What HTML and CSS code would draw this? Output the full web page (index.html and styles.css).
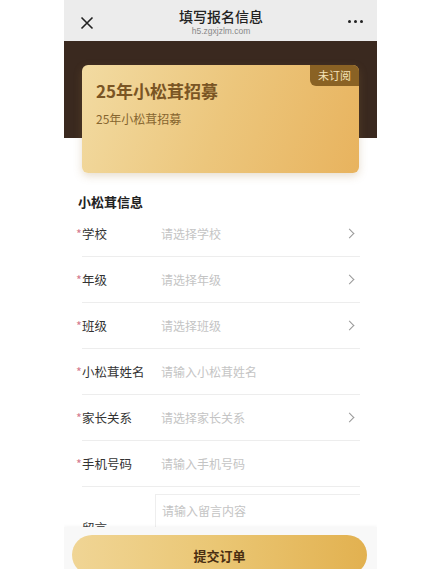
FILE: index.html
```html
<!DOCTYPE html>
<html lang="zh-CN">
<head>
    <meta charset="UTF-8">
    <meta name="viewport" content="width=device-width, initial-scale=1.0">
    <title>填写报名信息</title>
    <link rel="stylesheet" href="styles.css">
</head>
<body>
    <div class="phone">
        <div class="nav-bar">
            <svg class="nav-close" width="14" height="14" viewBox="0 0 14 14">
                <path d="M1.5 1.5 L12.5 12.5 M12.5 1.5 L1.5 12.5" stroke="#222" stroke-width="1.6" fill="none"/>
            </svg>
            <div class="nav-title">
                <div class="nav-name">填写报名信息</div>
                <div class="nav-url">h5.zgxjzlm.com</div>
            </div>
            <div class="nav-more">
                <span></span><span></span><span></span>
            </div>
        </div>

        <div class="hero">
            <div class="event-card">
                <span class="badge">未订阅</span>
                <h2 class="event-title">25年小松茸招募</h2>
                <p class="event-desc">25年小松茸招募</p>
            </div>
        </div>

        <form class="info-form">
            <h3 class="section-title">小松茸信息</h3>

            <div class="form-row">
                <label class="row-label"><i>*</i>学校</label>
                <span class="row-value">请选择学校</span>
                <span class="chevron"></span>
            </div>
            <div class="form-row">
                <label class="row-label"><i>*</i>年级</label>
                <span class="row-value">请选择年级</span>
                <span class="chevron"></span>
            </div>
            <div class="form-row">
                <label class="row-label"><i>*</i>班级</label>
                <span class="row-value">请选择班级</span>
                <span class="chevron"></span>
            </div>
            <div class="form-row">
                <label class="row-label"><i>*</i>小松茸姓名</label>
                <span class="row-value">请输入小松茸姓名</span>
            </div>
            <div class="form-row">
                <label class="row-label"><i>*</i>家长关系</label>
                <span class="row-value">请选择家长关系</span>
                <span class="chevron"></span>
            </div>
            <div class="form-row">
                <label class="row-label"><i>*</i>手机号码</label>
                <span class="row-value">请输入手机号码</span>
            </div>

            <div class="form-row message-row">
                <label class="row-label">留言</label>
                <div class="message-box">请输入留言内容</div>
            </div>
        </form>

        <div class="bottom-bar">
            <button type="button" class="submit-btn">提交订单</button>
        </div>
    </div>
</body>
</html>
```

FILE: styles.css
```css
* {
    margin: 0;
    padding: 0;
    box-sizing: border-box;
}

body {
    font-family: "Noto Sans CJK SC", "Noto Sans", sans-serif;
    background: #fff;
    width: 431px;
    height: 569px;
    overflow: hidden;
}

.phone {
    position: relative;
    width: 313px;
    height: 569px;
    margin-left: 64px;
    background: #fff;
    overflow: hidden;
}

/* 顶部导航 */
.nav-bar {
    height: 41px;
    background: #ececec;
    display: flex;
    align-items: center;
    justify-content: space-between;
    padding: 0 14px 0 16px;
}

.nav-close {
    margin-top: 4px;
}

.nav-title {
    text-align: center;
    margin-top: 3px;
}

.nav-name {
    font-size: 14px;
    font-weight: 500;
    color: #222;
    line-height: 19px;
}

.nav-url {
    font-family: "Liberation Sans", Arial, sans-serif;
    font-size: 8.5px;
    color: #888;
    line-height: 11px;
}

.nav-more {
    display: flex;
    gap: 3px;
    margin-top: 2px;
}

.nav-more span {
    width: 3px;
    height: 3px;
    border-radius: 50%;
    background: #222;
}

/* 活动卡片 */
.hero {
    padding: 24px 18px 0;
    background: linear-gradient(#3a291f 0, #3a291f 97px, transparent 97px);
}

.event-card {
    position: relative;
    height: 108px;
    border-radius: 6px;
    padding: 14px 14px;
    background: linear-gradient(110deg, #f2dba2 0%, #ecc67c 50%, #e8b35e 100%);
    box-shadow: 0 3px 8px rgba(160, 120, 60, 0.25);
}

.badge {
    position: absolute;
    top: 0;
    right: 0;
    width: 49px;
    height: 21px;
    line-height: 21px;
    text-align: center;
    font-size: 11px;
    color: #f4e2b8;
    background: #8a6224;
    border-radius: 0 6px 0 6px;
}

.event-title {
    font-size: 17px;
    font-weight: 700;
    color: #7a5524;
    line-height: 24px;
}

.event-desc {
    margin-top: 8px;
    font-size: 12px;
    color: #86652f;
    line-height: 16px;
}

/* 表单 */
.info-form {
    padding: 20px 17px 0 18px;
}

.section-title {
    font-size: 13px;
    font-weight: 700;
    color: #222;
    line-height: 18px;
    margin-left: -4px;
}

.form-row {
    display: flex;
    align-items: center;
    height: 46px;
    border-bottom: 1px solid #ededed;
    font-size: 12px;
}

.row-label {
    width: 79px;
    color: #333;
    font-size: 12.5px;
}

.row-label i {
    font-style: normal;
    color: #d47a8e;
    display: inline-block;
    width: 6px;
    margin-left: -6px;
}

.row-value {
    flex: 1;
    color: #c4c4c4;
}

.chevron {
    width: 7px;
    height: 7px;
    border-top: 1px solid #999;
    border-right: 1px solid #999;
    transform: rotate(45deg);
    margin-right: 7px;
}

.message-row {
    height: 84px;
    border-bottom: none;
    align-items: flex-start;
    padding-top: 7px;
}

.message-row .row-label {
    width: 73px;
    line-height: 18px;
    margin-top: 25px;
}

.message-box {
    flex: 1;
    height: 70px;
    border: 1px solid #eee;
    border-right: none;
    padding: 7px 6px;
    color: #c4c4c4;
    font-size: 12px;
}

/* 底部按钮 */
.bottom-bar {
    position: absolute;
    left: 0;
    right: 0;
    top: 527px;
    height: 50px;
    padding: 8px 10px 0 8px;
    background: #f8f8f8;
    box-shadow: 0 -1px 3px rgba(0, 0, 0, 0.04);
}

.submit-btn {
    width: 100%;
    height: 40px;
    border: none;
    border-radius: 20px;
    background: linear-gradient(90deg, #f0d595 0%, #eac673 50%, #e2b150 100%);
    font-family: inherit;
    font-size: 13px;
    font-weight: 700;
    color: #4a2e12;
}
```
